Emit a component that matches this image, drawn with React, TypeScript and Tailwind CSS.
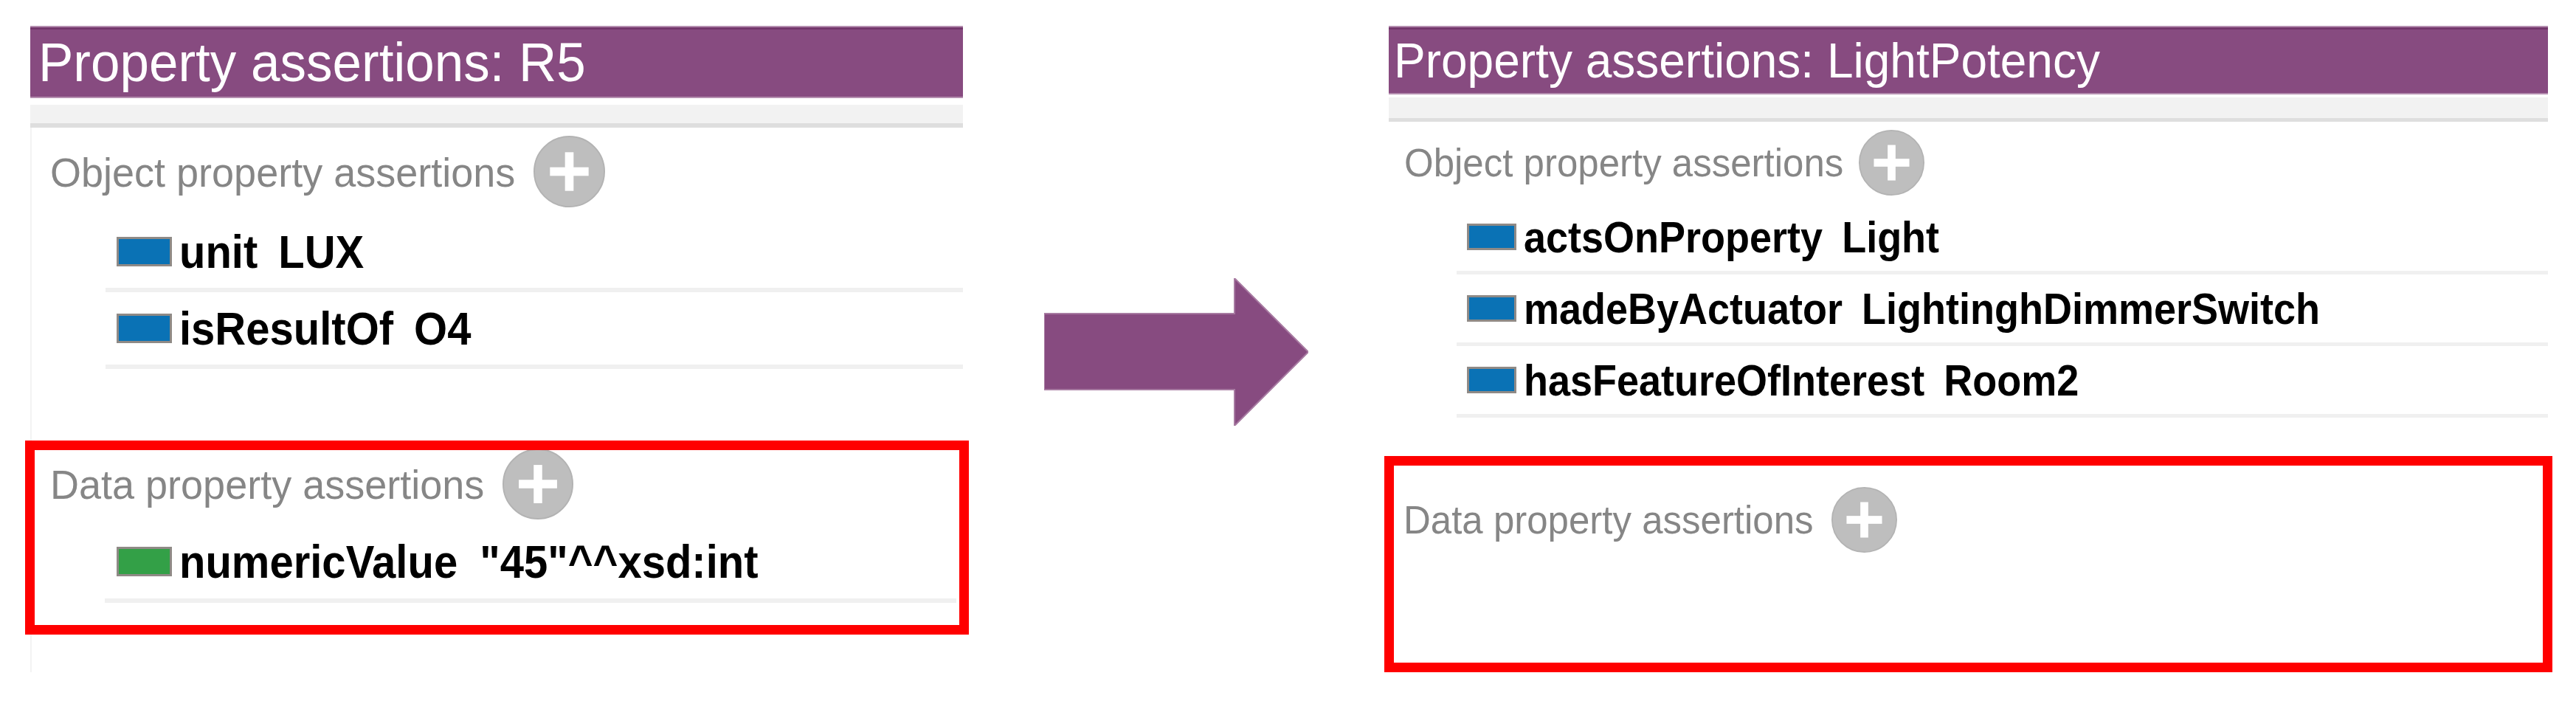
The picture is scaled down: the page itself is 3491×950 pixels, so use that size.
import React from "react";

type Row = { prop: string; value: string; kind: "object" | "data" };

const LEFT_OBJECT: Row[] = [
  { prop: "unit", value: "LUX", kind: "object" },
  { prop: "isResultOf", value: "O4", kind: "object" },
];

const LEFT_DATA: Row[] = [{ prop: "numericValue", value: "\"45\"^^xsd:int", kind: "data" }];

const RIGHT_OBJECT: Row[] = [
  { prop: "actsOnProperty", value: "Light", kind: "object" },
  { prop: "madeByActuator", value: "LightinghDimmerSwitch", kind: "object" },
  { prop: "hasFeatureOfInterest", value: "Room2", kind: "object" },
];

function PlusButton({ size }: { size: number }) {
  return (
    <svg width={size} height={size} viewBox="0 0 100 100" className="shrink-0">
      <circle cx="50" cy="50" r="49" fill="#bebebe" stroke="#b3b3b3" strokeWidth="2" />
      <rect x="23" y="44" width="54" height="12" fill="#ffffff" />
      <rect x="44" y="23" width="12" height="54" fill="#ffffff" />
    </svg>
  );
}

function Arrow() {
  return (
    <svg width="358" height="200" viewBox="0 0 358 200" className="shrink-0">
      <polygon points="0,48 258,48 258,0 358,100 258,200 258,151 0,151" fill="#874b80" stroke="#a77aa1" strokeWidth="2" />
    </svg>
  );
}

export default function App() {
  return (
    <div className="w-[3491px] h-[950px] bg-white flex items-start pt-[35px] pl-[41px] font-['Liberation_Sans',Arial,sans-serif] overflow-hidden">
      {/* left panel: R5 */}
      <div className="w-[1264px] shrink-0">
        <div className="h-[98px] bg-[#874b80] border-y-2 border-[#b48eaf] shadow-[inset_0_3px_0_#74376c] flex items-center pl-[11px] text-[71px] leading-none text-white whitespace-nowrap">
          <span className="scale-y-[1.04]">Property assertions: R5</span>
        </div>
        <div className="mt-[9px] h-[31px] bg-[#f2f2f2] border-b-[6px] border-[#dedede]" />
        <div className="border-l-2 border-[#f3f3f3] pb-[51px]">
          <div className="h-[119px] flex items-center pl-[25px]">
            <span className="text-[54px] leading-none text-[#868686] whitespace-nowrap scale-y-[1.04]">Object property assertions</span>
            <span className="ml-[25px] flex"><PlusButton size={97} /></span>
          </div>
          <div className="ml-[100px]">
            {LEFT_OBJECT.map((r) => (
              <div key={r.prop} className="h-[104px] border-b-[6px] border-[#f0f0f0] flex items-center pl-[15px]">
                <span className="w-[75px] h-[40px] border-[3px] border-[#8f8a86] bg-[#0a72b5] shrink-0" />
                <span className="ml-[10px] text-[58px] leading-none font-bold text-black whitespace-nowrap scale-y-[1.1]">{r.prop}</span>
                <span className="ml-[28px] text-[58px] leading-none font-bold text-black whitespace-nowrap scale-y-[1.1]">{r.value}</span>
              </div>
            ))}
          </div>

          {/* highlighted data section */}
          <div className="mt-[97px] -ml-[9px] -mr-[8px] border-[13px] border-[#ff0000] overflow-hidden pb-[30px]">
            <div className="h-[92px] flex items-center pl-[21px]">
              <span className="text-[54px] leading-none text-[#868686] whitespace-nowrap scale-y-[1.04]">Data property assertions</span>
              <span className="ml-[25px] flex"><PlusButton size={96} /></span>
            </div>
            <div className="ml-[95px] mr-[4px]">
              {LEFT_DATA.map((r) => (
                <div key={r.prop} className="h-[115px] pt-[9px] border-b-[6px] border-[#f0f0f0] flex items-center pl-[16px]">
                  <span className="w-[75px] h-[40px] border-[3px] border-[#8f8a86] bg-[#33a047] shrink-0" />
                  <span className="ml-[10px] text-[58px] leading-none font-bold text-black whitespace-nowrap scale-y-[1.1]">{r.prop}</span>
                  <span className="ml-[30px] text-[58px] leading-none font-bold text-black whitespace-nowrap scale-y-[1.1]">{r.value}</span>
                </div>
              ))}
            </div>
          </div>
        </div>
      </div>

      <div className="ml-[110px] mt-[342px] flex">
        <Arrow />
      </div>

      {/* right panel: LightPotency */}
      <div className="ml-[109px] w-[1571px] shrink-0">
        <div className="h-[93px] bg-[#874b80] border-y-2 border-[#b48eaf] shadow-[inset_0_3px_0_#74376c] flex items-center pl-[7px] text-[64px] leading-none text-white whitespace-nowrap">
          <span className="scale-y-[1.04]">Property assertions: LightPotency</span>
        </div>
        <div className="mt-[4px] h-[33px] bg-[#f2f2f2] border-b-[5px] border-[#dedede]" />
        <div className="h-[110px] flex items-center pl-[21px]">
          <span className="text-[51px] leading-none text-[#868686] whitespace-nowrap scale-y-[1.04]">Object property assertions</span>
          <span className="ml-[21px] flex"><PlusButton size={89} /></span>
        </div>
        <div className="ml-[92px]">
          {RIGHT_OBJECT.map((r) => (
            <div key={r.prop} className="h-[97px] border-b-[5px] border-[#f0f0f0] flex items-center pl-[14px]">
              <span className="w-[67px] h-[36px] border-[3px] border-[#8f8a86] bg-[#0a72b5] shrink-0" />
              <span className="ml-[10px] text-[54px] leading-none font-bold text-black whitespace-nowrap scale-y-[1.1]">{r.prop}</span>
              <span className="ml-[26px] text-[54px] leading-none font-bold text-black whitespace-nowrap scale-y-[1.1]">{r.value}</span>
            </div>
          ))}
        </div>

        <div className="mt-[52px] -mx-[6px] border-[13px] border-[#ff0000] overflow-hidden pt-[29px] pb-[150px]">
          <div className="h-[88px] flex items-center pl-[13px]">
            <span className="text-[51px] leading-none text-[#868686] whitespace-nowrap scale-y-[1.04]">Data property assertions</span>
            <span className="ml-[24px] flex"><PlusButton size={89} /></span>
          </div>
        </div>
      </div>
    </div>
  );
}
